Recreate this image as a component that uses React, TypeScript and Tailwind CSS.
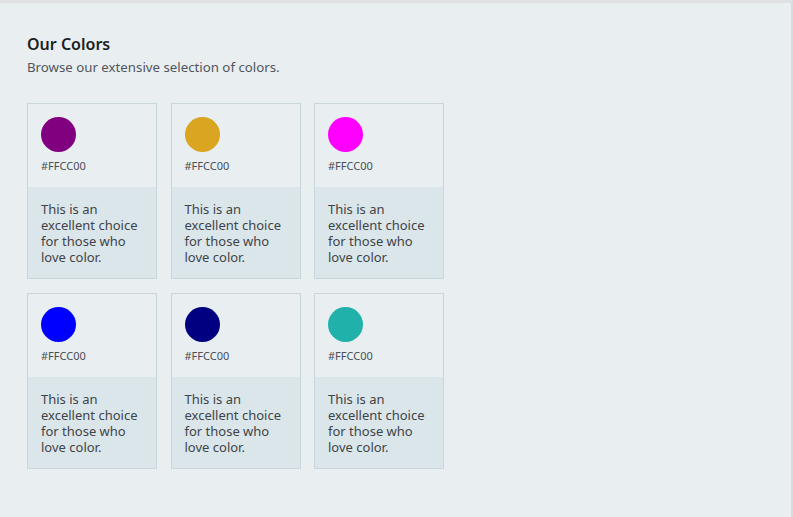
const colors = [
  { swatch: "bg-[#800080]" },
  { swatch: "bg-[#daa520]" },
  { swatch: "bg-[#ff00ff]" },
  { swatch: "bg-[#0000ff]" },
  { swatch: "bg-[#000080]" },
  { swatch: "bg-[#20b2aa]" },
];

function ColorCard({ swatch }: { swatch: string }) {
  return (
    <div className="flex w-[130px] flex-col border border-[#c9d6db] bg-[#e9eef1]">
      <div className="px-[13px] pt-[13px] pb-[14px]">
        <div className={`h-[35px] w-[35px] rounded-full ${swatch}`} />
        <p className="mt-[7px] text-[11px] leading-[14px] text-[#4a4f55]">#FFCC00</p>
      </div>
      <div className="bg-[#dbe6ea] px-[13px] pt-[14px] pb-[13px]">
        <p className="text-[13px] leading-[16px] text-[#3f4449]">
          This is an excellent choice for those who love color.
        </p>
      </div>
    </div>
  );
}

export default function App() {
  return (
    <div
      className="min-h-[517px] border-t-[3px] border-r-2 border-t-[#dfe0e1] border-r-[#d8dcde] bg-[#e9eef1]"
      style={{ fontFamily: '"Noto Sans", sans-serif' }}
    >
      <div className="px-[27px] pt-[30px]">
        <h2 className="text-[16px] leading-[22px] font-semibold text-[#1c1f22]">Our Colors</h2>
        <p className="mt-[3px] text-[13.25px] leading-[18px] text-[#50565c]">
          Browse our extensive selection of colors.
        </p>
        <div className="mt-[27px] grid w-fit grid-cols-3 gap-x-[13.5px] gap-y-[14px]">
          {colors.map((c, i) => (
            <ColorCard key={i} swatch={c.swatch} />
          ))}
        </div>
      </div>
    </div>
  );
}
